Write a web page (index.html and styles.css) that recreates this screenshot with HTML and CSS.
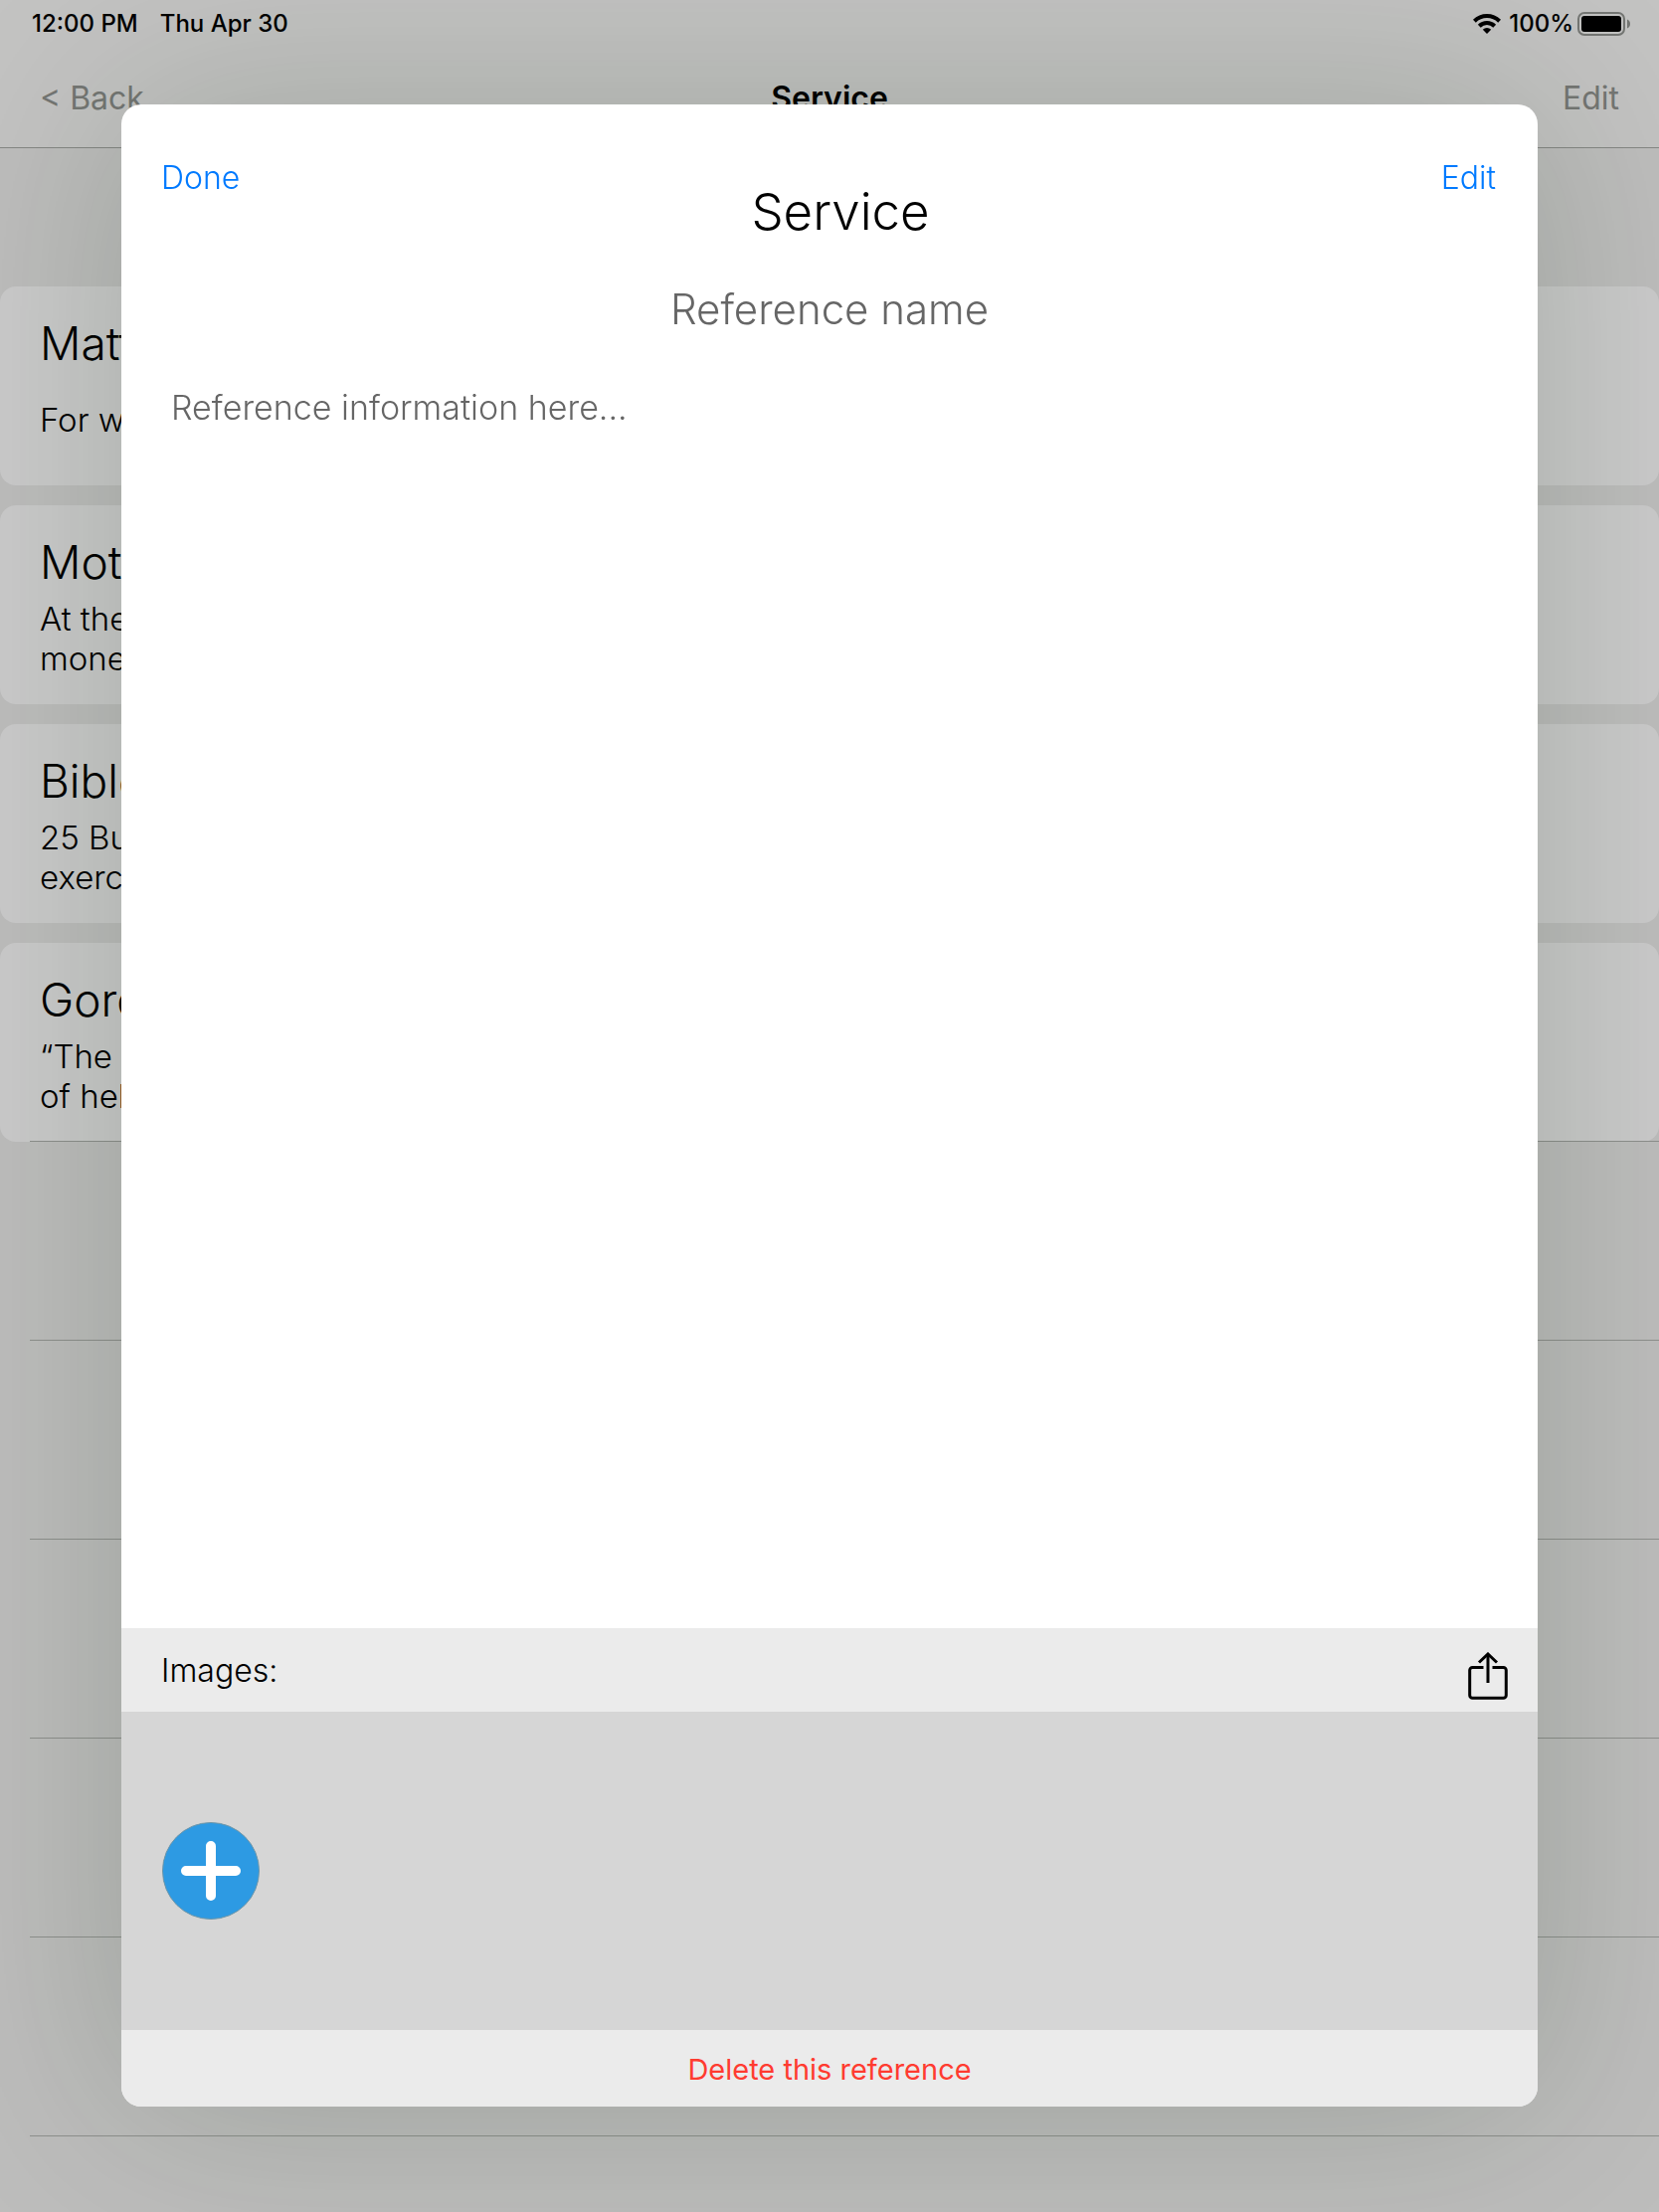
FILE: index.html
```html
<!DOCTYPE html>
<html lang="en">
<head>
<meta charset="utf-8">
<meta name="viewport" content="width=device-width, initial-scale=1">
<title>Service</title>
<link rel="stylesheet" href="styles.css">
</head>
<body>
<div class="page">
  <header class="top">
    <div class="status">
      <span class="status-time">12:00 PM</span>
      <span>Thu Apr 30</span>
      <div class="status-right">
        <svg class="wifi" width="28" height="20" viewBox="0 0 28 20" aria-hidden="true">
          <g fill="none" stroke="#000" stroke-width="4">
            <path d="M1.4 7.2A18 18 0 0 1 26.600 7.200"/>
            <path d="M6.300 12.200A11 11 0 0 1 21.700 12.200"/>
          </g>
          <path d="M14 20L9.800 15.800A6 6 0 0 1 18.200 15.800Z"/>
        </svg>
        <span>100%</span>
        <svg class="battery" width="54" height="24" viewBox="0 0 54 24" aria-hidden="true">
          <rect x="1" y="1" width="46" height="22" rx="6" fill="none" stroke="#747673" stroke-width="2"/>
          <rect x="4" y="4" width="40" height="16" rx="3"/>
          <path d="M50 7.500C54 9 54 15 50 16.500Z" fill="#747673"/>
        </svg>
      </div>
    </div>
    <nav class="nav">
      <button class="nav-button" type="button">&lt; Back</button>
      <h1 class="nav-title">Service</h1>
      <button class="nav-button nav-end" type="button">Edit</button>
    </nav>
  </header>
  <main class="list">
    <article class="card"><h2 class="card-title">Matt</h2><p class="card-text">For w</p></article>
    <article class="card"><h2 class="card-title">Mot</h2><p class="card-text">At the<br>mone</p></article>
    <article class="card"><h2 class="card-title">Bible</h2><p class="card-text">25 Bu<br>exerc</p></article>
    <article class="card"><h2 class="card-title">Gord</h2><p class="card-text">“The<br>of hel</p></article>
    <div class="rows">
      <div class="row"></div>
      <div class="row"></div>
      <div class="row"></div>
      <div class="row"></div>
      <div class="row"></div>
    </div>
  </main>
</div>

<div class="overlay">
  <section class="sheet" role="dialog" aria-labelledby="sheet-title">
    <header class="sheet-head">
      <button class="link-button" type="button">Done</button>
      <h2 class="sheet-title" id="sheet-title">Service</h2>
      <button class="link-button" type="button">Edit</button>
    </header>
    <input class="name" type="text" placeholder="Reference name" aria-label="Reference name">
    <textarea class="info" placeholder="Reference information here..." aria-label="Reference information"></textarea>
    <div class="images-bar">
      <h3 class="images-label">Images:</h3>
      <button class="icon-button" type="button" aria-label="Share">
        <svg width="40" height="48" viewBox="0 0 40 48" aria-hidden="true">
          <g fill="none" stroke="#000" stroke-width="3">
            <path d="M15.500 15.500H4.500a2.800 2.800 0 0 0-2.800 2.800V43.500a2.800 2.800 0 0 0 2.800 2.800H35.500a2.800 2.800 0 0 0 2.800-2.800V18.300a2.800 2.800 0 0 0-2.800-2.800H24.500"/>
            <path d="M20 31V2"/>
            <path d="M11 10.500L20 2L29 10.500"/>
          </g>
        </svg>
      </button>
    </div>
    <div class="images">
      <button class="icon-button" type="button" aria-label="Add image">
        <svg width="98" height="98" viewBox="0 0 98 98" aria-hidden="true">
          <circle cx="49" cy="49" r="48.500" fill="#2d9ae3" stroke="#6f96a8" stroke-width="1"/>
          <path d="M24 49H74M49 24V74" stroke="#fff" stroke-width="10" stroke-linecap="round"/>
        </svg>
      </button>
    </div>
    <footer class="sheet-foot">
      <button class="delete" type="button">Delete this reference</button>
    </footer>
  </section>
</div>
</body>
</html>
```
FILE: styles.css
```css
* {
  box-sizing: border-box;
}

body {
  margin: 0;
  background: #bdbdbc;
  color: #000;
  font-family: Inter, "Liberation Sans", sans-serif;
  font-weight: 300;
}

h1, h2, h3, p {
  margin: 0;
  font-weight: 300;
}

button {
  padding: 0;
  border: 0;
  background: none;
  font: inherit;
}

.page {
  min-height: 100vh;
  overflow: hidden;
}

.top {
  height: 149px;
  background: #c3c3c2;
  border-bottom: 1px solid #858784;
}

.status {
  display: flex;
  align-items: center;
  height: 48px;
  padding: 0 28px 0 32px;
  font-size: 24px;
  font-weight: 500;
  line-height: 28px;
}

.status-time {
  margin-right: 22px;
}

.status-right {
  display: flex;
  align-items: center;
  gap: 4px;
  margin-left: auto;
}

.wifi {
  margin-right: 4px;
}

.nav {
  display: grid;
  grid-template-columns: 1fr auto 1fr;
  align-items: center;
  height: 100px;
  padding: 0 40px;
  font-size: 32px;
}

.nav-button {
  justify-self: start;
  color: #747673;
  font-weight: 400;
}

.nav-end {
  justify-self: end;
}

.nav-title {
  font-size: 32px;
  font-weight: 600;
}

.list {
  display: flex;
  flex-direction: column;
  gap: 20px;
  padding-top: 139px;
}

.card {
  display: flex;
  flex-direction: column;
  height: 200px;
  padding: 27px 40px 19px;
  border-radius: 16px;
  background: #cacaca;
}

.card-title {
  font-size: 46px;
  line-height: 60px;
}

.card-text {
  margin: auto 0;
  font-size: 33px;
  line-height: 40px;
}

.rows {
  margin: -21px 0 0 30px;
  border-top: 1px solid #8e908d;
}

.row {
  height: 200px;
  border-bottom: 1px solid #8e908d;
}

.overlay {
  position: fixed;
  inset: 0;
  display: flex;
  padding: 105px 122px 106px;
  overflow: hidden;
}

.sheet {
  display: flex;
  flex: 1;
  flex-direction: column;
  border-radius: 20px;
  background: linear-gradient(#fff 50%, #ebebeb 50%);
  box-shadow: 0 0 200px rgba(0, 32, 8, 0.18);
}

.sheet-head {
  display: flex;
  align-items: flex-start;
  padding: 54px 42px 0 40px;
}

.link-button {
  color: #007aff;
  font-size: 32px;
  line-height: 40px;
}

.sheet-title {
  flex: 1;
  padding-top: 22px;
  font-size: 51px;
  line-height: 64px;
  text-align: center;
}

.name,
.info {
  border: 0;
  outline: 0;
  background: #fff;
  color: #000;
  font: inherit;
}

.name::placeholder,
.info::placeholder {
  color: #666;
  opacity: 1;
}

.name {
  height: 60px;
  margin: 35px 40px 0;
  padding: 0;
  font-size: 42px;
  text-align: center;
}

.info {
  flex: 1;
  padding: 50px;
  font-size: 34px;
  line-height: 40px;
  resize: none;
}

.images-bar {
  display: flex;
  align-items: center;
  justify-content: space-between;
  height: 84px;
  padding: 2px 30px 0 40px;
  background: #ebebeb;
}

.images-label {
  font-size: 32px;
  line-height: 40px;
}

.images-bar .icon-button {
  padding-top: 10px;
}

.icon-button svg {
  display: block;
}

.images {
  display: flex;
  align-items: center;
  height: 320px;
  padding: 0 41px;
  background: #d6d6d6;
}

.sheet-foot {
  display: flex;
  align-items: center;
  justify-content: center;
  height: 77px;
  padding-top: 2px;
  border-radius: 0 0 20px 20px;
  background: #ebebeb;
}

.delete {
  color: #ff3b30;
  font-size: 29px;
  font-weight: 400;
}
```
